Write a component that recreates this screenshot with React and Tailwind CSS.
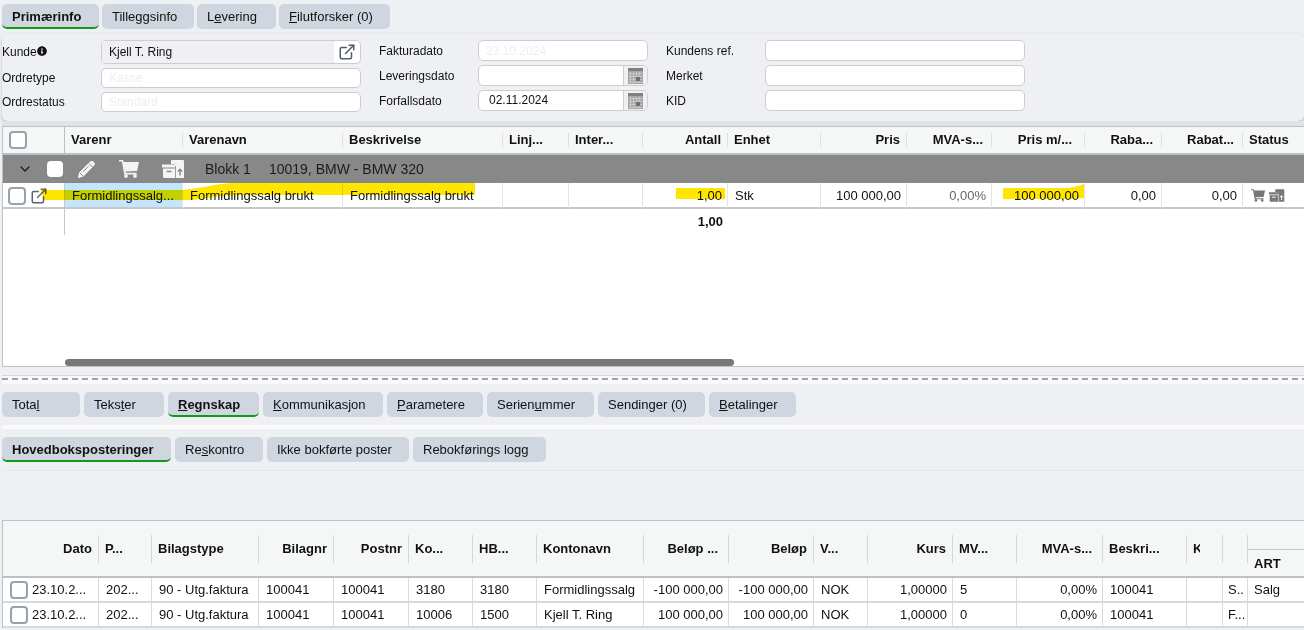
import React, { useState } from 'react';
import { ChevronDown, ExternalLink } from 'lucide-react';
import { FaInfoCircle } from 'react-icons/fa';
import clsx from 'clsx';

const mainTabs = [
    { id: 'primary', label: 'Primærinfo', width: 'w-[97px]' },
    { id: 'extra', label: 'Tilleggsinfo', width: 'w-[92px]' },
    { id: 'delivery', label: <>L<u>e</u>vering</>, width: 'w-[79px]' },
    { id: 'files', label: <><u>F</u>ilutforsker (0)</>, width: 'w-[111px]' },
];

const detailTabs = [
    { id: 'total', label: <>Tota<u>l</u></>, width: 'w-[78px]' },
    { id: 'texts', label: <>Teks<u>t</u>er</>, width: 'w-[80px]' },
    { id: 'accounting', label: <><u>R</u>egnskap</>, width: 'w-[91px]' },
    { id: 'communication', label: <><u>K</u>ommunikas<u>j</u>on</>, width: 'w-[120px]' },
    { id: 'params', label: <><u>P</u>arametere</>, width: 'w-[96px]' },
    { id: 'serial', label: <>Serien<u>u</u>mmer</>, width: 'w-[107px]' },
    { id: 'shipments', label: 'Sendinger (0)', width: 'w-[107px]' },
    { id: 'payments', label: <><u>B</u>etalinger</>, width: 'w-[87px]' },
];

const ledgerTabs = [
    { id: 'ledger', label: 'Hovedboksposteringer', width: 'w-[169px]' },
    { id: 'sub', label: <>Re<u>s</u>kontro</>, width: 'w-[88px]' },
    { id: 'unposted', label: 'Ikke bokførte poster', width: 'w-[142px]' },
    { id: 'log', label: 'Rebokførings logg', width: 'w-[133px]' },
];

const orderColumns = [
    { label: 'Varenr', width: 'w-[118px]' },
    { label: 'Varenavn', width: 'w-[160px]' },
    { label: 'Beskrivelse', width: 'w-[160px]' },
    { label: 'Linj...', width: 'w-[66px]' },
    { label: 'Inter...', width: 'w-[74px]' },
    { label: 'Antall', width: 'w-[85px]', right: true },
    { label: 'Enhet', width: 'w-[93px]' },
    { label: 'Pris', width: 'w-[86px]', right: true },
    { label: 'MVA-s...', width: 'w-[85px]', right: true, pad: 'pr-2' },
    { label: 'Pris m/...', width: 'w-[93px]', right: true, pad: 'pr-3' },
    { label: 'Raba...', width: 'w-[77px]', right: true, pad: 'pr-2' },
    { label: 'Rabat...', width: 'w-[81px]', right: true, pad: 'pr-2' },
];

const orderLine = ['Formidlingssalg...', 'Formidlingssalg brukt', 'Formidlingssalg brukt', '', '', '1,00', 'Stk', '100 000,00', '0,00%', '100 000,00', '0,00', '0,00'];

const ledgerColumns = [
    { label: 'P...', width: 'w-[53px]' },
    { label: 'Bilagstype', width: 'w-[107px]' },
    { label: 'Bilagnr', width: 'w-[75px]', headRight: true },
    { label: 'Postnr', width: 'w-[75px]', headRight: true },
    { label: 'Ko...', width: 'w-[64px]' },
    { label: 'HB...', width: 'w-[64px]' },
    { label: 'Kontonavn', width: 'w-[107px]' },
    { label: 'Beløp ...', width: 'w-[85px]', headRight: true, right: true, cut: true },
    { label: 'Beløp', width: 'w-[85px]', headRight: true, right: true },
    { label: 'V...', width: 'w-[54px]' },
    { label: 'Kurs', width: 'w-[85px]', headRight: true, right: true },
    { label: 'MV...', width: 'w-[64px]' },
    { label: 'MVA-s...', width: 'w-[86px]', headRight: true, right: true, cut: true },
    { label: 'Beskri...', width: 'w-[84px]' },
    { label: 'K', width: 'w-[36px]', clip: true },
    { label: '', width: 'w-[25px]', narrow: true },
];

const ledgerRows = [
    ['202...', '90 - Utg.faktura', '100041', '100041', '3180', '3180', 'Formidlingssalg', '-100 000,00', '-100 000,00', 'NOK', '1,00000', '5', '0,00%', '100041', '', 'S..'],
    ['202...', '90 - Utg.faktura', '100041', '100041', '10006', '1500', 'Kjell T. Ring', '100 000,00', '100 000,00', 'NOK', '1,00000', '0', '0,00%', '100041', '', 'F...'],
];

const Tabs = ({ tabs, initial, gap }) => {
    const [active, setActive] = useState(initial);
    return (
        <div className={clsx('flex', gap)} role="tablist">
            {tabs.map(tab => (
                <button
                    key={tab.id}
                    role="tab"
                    aria-selected={active === tab.id}
                    onClick={() => setActive(tab.id)}
                    className={clsx(
                        'h-[25px] shrink-0 rounded-[5px] bg-[#cfd6e0] pl-2.5 text-left text-[13px] leading-4 whitespace-nowrap',
                        tab.width,
                        active === tab.id && 'border-b-2 border-[#109a1c] pt-0.5 font-bold'
                    )}
                >
                    {tab.label}
                </button>
            ))}
        </div>
    );
};

const Checkbox = ({ label, size = 'size-[18px]', className = 'border-[#98a2a8]' }) => (
    <input
        type="checkbox"
        aria-label={label}
        className={clsx('block shrink-0 appearance-none rounded-[4px] border-2 bg-white checked:bg-[#109a1c]', size, className)}
    />
);

const CalendarIcon = () => (
    <svg width="15" height="16" viewBox="0 0 15 16">
        <rect width="15" height="16" fill="#a6a6a6" />
        <rect width="15" height="3" fill="#808080" />
        <path d="M1 5.5h13M1 8.5h13M1 11.5h13M1 14.5h13M2.5 4v11M5.5 4v11M8.5 4v11M11.5 4v11" stroke="#c8c8c8" strokeWidth="1" />
        <rect x="8" y="9" width="4" height="4" fill="#707070" />
    </svg>
);

const CartIcon = ({ className }) => (
    <svg viewBox="0 0 20 18" className={className} fill="currentColor">
        <path d="M0 0h3.6c.4 0 .7.3.8.7L4.7 2H20l-1.800 8.400c-.1.4-.4.6-.8.6l-11 .4.3 1.400h11v1.600H5.900c-.4 0-.7-.3-.8-.7L2.900 1.600H0z" />
        <circle cx="7" cy="16" r="1.9" />
        <circle cx="16" cy="16" r="1.9" />
    </svg>
);

const BoxesIcon = ({ className, line }) => (
    <svg viewBox="0 0 23 18" className={className} fill="currentColor">
        <path d="M9 1.2C9 .5 9.500 0 10.200 0h10.600c.7 0 1.200.5 1.200 1.200V18H13V4H9z" />
        <path d="M0 4.500h14v3H0zM1 8.500h12V18H2.200C1.500 18 1 17.500 1 16.800z" />
        <path d="M4.500 11.500h5M18 15.500V9.500M15.800 11.500l2.200-2.200 2.200 2.200" fill="none" stroke={line} strokeWidth="1.4" />
        <path d="M13.500 6v12" stroke={line} strokeWidth=".8" />
    </svg>
);

const PencilIcon = () => (
    <svg width="19" height="19" viewBox="0 0 19 19" fill="none" stroke="#fff">
        <path d="M1.500 17.500l1.200-5L13 2.200c1-1 2.500-1 3.500-.1s1 2.600 0 3.600L6.300 16z" fill="#f4f4f4" strokeWidth="1" />
        <path d="M6 11.800l5.500-5.500M3 13l3 3M12 3.500l3.500 3.500" stroke="#888" strokeWidth="1" />
    </svg>
);

const Field = ({ id, label, height = 'h-[21px]', children }) => (
    <div className={clsx('flex items-center', height)}>
        <label htmlFor={id} className="flex w-[99px] shrink-0 items-center text-xs">{label}</label>
        {children}
    </div>
);

const inputBox = 'h-full rounded-[5px] border border-[#cfcccd] bg-white text-xs outline-none placeholder:text-[#eceef4]';

const OrderForm = () => (
    <section className="flex h-[88px] gap-[18px] rounded-md border-t border-[#e6e8ec] bg-[#eef0f4] pt-1.5 shadow-[0_2px_3px_#b9bcc4]">
        <div className="flex flex-col gap-1">
            <Field id="kunde" height="h-6" label={<>Kunde<FaInfoCircle size={10} className="mb-0.5" /></>}>
                <div className={clsx(inputBox, 'flex w-[260px] overflow-hidden')}>
                    <input id="kunde" defaultValue="Kjell T. Ring" className="min-w-0 flex-1 bg-[#eef0f4] pl-[7px] outline-none" />
                    <button aria-label="Åpne kunde" className="flex w-[26px] items-center justify-center text-[#535b6b]">
                        <ExternalLink size={18} strokeWidth={2} />
                    </button>
                </div>
            </Field>
            <Field id="ordretype" height="h-5" label="Ordretype">
                <input id="ordretype" placeholder="Kasse" className={clsx(inputBox, 'w-[260px] px-[7px]')} />
            </Field>
            <Field id="ordrestatus" height="h-5" label="Ordrestatus">
                <input id="ordrestatus" placeholder="Standard" className={clsx(inputBox, 'w-[260px] px-[7px]')} />
            </Field>
        </div>
        <div className="flex flex-col gap-1">
            <Field id="fakturadato" label="Fakturadato">
                <input id="fakturadato" placeholder="23.10.2024" className={clsx(inputBox, 'w-[170px] px-[7px]')} />
            </Field>
            {[
                { id: 'leveringsdato', label: 'Leveringsdato', value: '' },
                { id: 'forfallsdato', label: 'Forfallsdato', value: '02.11.2024' },
            ].map(field => (
                <Field key={field.id} id={field.id} label={field.label}>
                    <div className={clsx(inputBox, 'flex w-[170px] overflow-hidden')}>
                        <input id={field.id} defaultValue={field.value} className="min-w-0 flex-1 pb-0.5 pl-2.5 outline-none" />
                        <button aria-label={`Velg ${field.label}`} className="flex w-6 items-center justify-center border-l border-[#cfcccd] bg-[#f0f0f2]">
                            <CalendarIcon />
                        </button>
                    </div>
                </Field>
            ))}
        </div>
        <div className="flex flex-col gap-1">
            {['Kundens ref.', 'Merket', 'KID'].map(label => (
                <Field key={label} id={label} label={label}>
                    <input id={label} className={clsx(inputBox, 'w-[260px] px-[7px]')} />
                </Field>
            ))}
        </div>
    </section>
);

const OrderLines = () => (
    <section className="relative flex h-[241px] flex-col overflow-hidden border-y border-l border-[#b9c2c7] bg-white">
        <table className="w-full table-fixed border-separate border-spacing-0 text-[13px] whitespace-nowrap">
            <colgroup>
                <col className="w-[62px]" />
                {orderColumns.map(col => <col key={col.label} className={col.width} />)}
                <col />
            </colgroup>
            <thead className="bg-[#f5f7f7]">
                <tr className="h-7">
                    <th className="border-r border-b-2 border-[#b9c2c7] pl-1.5"><Checkbox label="Velg alle" /></th>
                    {orderColumns.map(col => (
                        <th key={col.label} className="border-b-2 border-[#b9c2c7] p-0">
                            <div className={clsx('h-3.5 border-r border-[#dcdfe1] pl-1.5 leading-[14px]', col.right ? 'text-right' : 'text-left', col.pad || 'pr-1.5')}>{col.label}</div>
                        </th>
                    ))}
                    <th className="border-b-2 border-[#b9c2c7] p-0 pl-1.5 text-left">Status</th>
                </tr>
            </thead>
            <tbody>
                <tr className="h-7 bg-[#888]">
                    <td colSpan={14} className="p-0">
                        <div className="flex items-center text-sm text-[#1c1c1c]">
                            <button aria-label="Skjul blokk" className="ml-3.5"><ChevronDown size={16} /></button>
                            <Checkbox label="Velg blokk" size="size-4" className="ml-3.5 border-white" />
                            <button aria-label="Rediger" className="ml-3.5"><PencilIcon /></button>
                            <CartIcon className="ml-[23px] h-[18px] w-5 text-[#f4f4f4]" />
                            <BoxesIcon className="ml-[23px] h-[18px] w-[23px] text-[#f4f4f4]" line="#888" />
                            <span className="ml-5">Blokk 1</span>
                            <span className="ml-[18px]">10019, BMW - BMW 320</span>
                        </div>
                    </td>
                </tr>
                <tr className="h-[26px]">
                    <td className="border-r border-b-2 border-[#c4c8cb] p-0">
                        <div className="flex items-center gap-1 pt-0.5 pl-[5px]">
                            <Checkbox label="Velg linje" />
                            <button aria-label="Åpne linje" className="text-[#5d6470]"><ExternalLink size={18} /></button>
                        </div>
                    </td>
                    {orderLine.map((value, i) => (
                        <td
                            key={orderColumns[i].label}
                            className={clsx(
                                'border-r border-b-2 border-r-[#e2e4e6] border-b-[#c4c8cb] p-0 pt-0.5 pr-[5px] pl-[7px]',
                                orderColumns[i].right && 'text-right',
                                i === 0 && 'bg-[#c3e6fd]',
                                value === '0,00%' && 'text-[#666]'
                            )}
                        >
                            {value}
                        </td>
                    ))}
                    <td className="border-b-2 border-[#c4c8cb] p-0 pl-2">
                        <div className="flex gap-1 text-[#777]">
                            <CartIcon className="h-[13px] w-3.5" />
                            <BoxesIcon className="h-[13px] w-4" line="#fff" />
                        </div>
                    </td>
                </tr>
                <tr className="h-[26px] font-bold">
                    <td className="border-r border-[#c4c8cb] p-0" />
                    <td colSpan={5} className="p-0" />
                    <td className="p-0 pr-[5px] text-right">1,00</td>
                    <td colSpan={7} className="p-0" />
                </tr>
            </tbody>
        </table>
        {/* marker strokes over the line */}
        <svg className="pointer-events-none absolute top-0 left-0 mix-blend-multiply" width="1100" height="90" fill="#ffe600">
            <path d="M38 63h24v10H41z" />
            <path d="M62 63H178q20-2 28-4t25-3l80 0h161v12H250q-30 0-40 2t-25 3H62z" />
            <path d="M673 61h49v11h-49z" />
            <path d="M1000 61h62q8 0 19-4v14q-8 1-16 1h-65z" />
        </svg>
        <div className="mt-auto pl-[62px]">
            <div className="h-[7px] w-[54%] rounded-full bg-[#777]" />
        </div>
    </section>
);

const Ledger = () => (
    <table className="w-full table-fixed border-separate border-spacing-0 border-t border-l border-[#b9c2c7] bg-white text-[13px] whitespace-nowrap">
        <colgroup>
            <col className="w-[96px]" />
            {ledgerColumns.map((col, i) => <col key={i} className={col.width} />)}
            <col />
        </colgroup>
        <thead className="bg-[#f5f7f7]">
            <tr className="h-[57px]">
                <th className="border-b-2 border-[#b9c2c7] p-0">
                    <div className="h-7 border-r border-[#d4d8da] pr-1.5 text-right leading-7">Dato</div>
                </th>
                {ledgerColumns.map((col, i) => (
                    <th key={i} className="border-b-2 border-[#b9c2c7] p-0">
                        <div className={clsx('h-7 border-r border-[#d4d8da] pl-1.5 leading-7', col.headRight ? 'text-right' : 'text-left', col.cut ? 'pr-2.5' : 'pr-1.5')}>
                            {col.clip ? <span className="block w-[7px] overflow-hidden">{col.label}</span> : col.label}
                        </div>
                    </th>
                ))}
                <th className="border-b-2 border-[#b9c2c7] p-0">
                    <div className="mt-7 h-[27px] border-t border-[#c8ccd0] pl-1.5 text-left leading-[27px]">ART</div>
                </th>
            </tr>
        </thead>
        <tbody>
            {ledgerRows.map((row, r) => (
                <tr key={r} className="h-[25px]">
                    <td className="border-r border-b-2 border-r-[#d9dcde] border-b-[#d6dadd] p-0">
                        <div className="flex items-center gap-1 pl-[7px]">
                            <Checkbox label={`Velg post ${r + 1}`} />
                            <span>23.10.2...</span>
                        </div>
                    </td>
                    {row.map((value, i) => (
                        <td
                            key={i}
                            className={clsx(
                                'border-r border-b-2 border-r-[#d9dcde] border-b-[#d6dadd] p-0',
                                ledgerColumns[i].right ? 'pr-[5px] text-right' : ledgerColumns[i].narrow ? 'pl-[5px]' : 'pl-[7px]'
                            )}
                        >
                            {value}
                        </td>
                    ))}
                    <td className="border-b-2 border-[#d6dadd] p-0 pl-1.5">{r === 0 && 'Salg'}</td>
                </tr>
            ))}
        </tbody>
    </table>
);

const App = () => (
    <main className="min-h-screen overflow-hidden bg-[#eef0f4] pl-0.5 font-['Liberation_Sans',Arial,sans-serif] text-[#111]">
        <div className="pt-1 pb-1">
            <Tabs tabs={mainTabs} initial="primary" gap="gap-[3px]" />
        </div>
        <OrderForm />
        <div className="h-[5px] bg-[#e0e2e7]" />
        <OrderLines />
        <div className="mt-2 border-t border-[#d6d8dc] bg-[#f8f8f9] pt-0.5 pb-1">
            <div className="h-0.5 bg-[repeating-linear-gradient(90deg,#a3a3a3_0_6px,transparent_6px_10px)]" />
        </div>
        <div className="border-b-4 border-[#fafafb] pt-2 pb-2">
            <Tabs tabs={detailTabs} initial="accounting" gap="gap-1" />
        </div>
        <div className="pt-2 pb-2">
            <Tabs tabs={ledgerTabs} initial="ledger" gap="gap-1" />
        </div>
        <section className="border-t border-[#e4e6ea] pt-[49px]">
            <Ledger />
        </section>
    </main>
);

export default App;
